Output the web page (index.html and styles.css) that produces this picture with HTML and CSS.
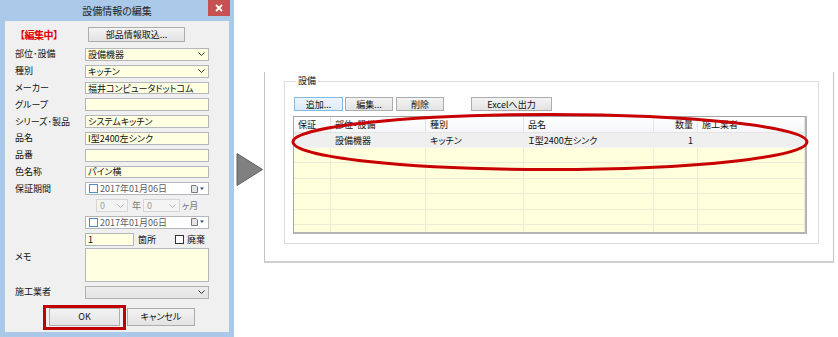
FILE: index.html
```html
<!DOCTYPE html>
<html lang="ja">
<head>
<meta charset="utf-8">
<title>設備情報の編集</title>
<link rel="stylesheet" href="styles.css">
</head>
<body>
<div class="page">
  <div class="dialog">
    <div class="titlebar">
      <span></span>
      <span class="title">設備情報の編集</span>
      <span class="close"><svg width="8" height="8" viewBox="0 0 8 8"><path d="M1 1 L7 7 M7 1 L1 7" stroke="#fff" stroke-width="1.8"/></svg></span>
    </div>
    <div class="dbody">
      <div class="row r-top">
        <div class="lbl editing">【編集中】</div>
        <button class="btn import">部品情報取込...</button>
      </div>
      <div class="row r-first">
        <div class="lbl">部位･設備</div>
        <div class="field select"><span>設備機器</span><svg class="chev" width="7" height="4" viewBox="0 0 7 4"><path d="M0.5 0.5 L3.5 3.5 L6.5 0.5" fill="none" stroke="#333" stroke-width="1"/></svg></div>
      </div>
      <div class="row">
        <div class="lbl">種別</div>
        <div class="field select"><span>キッチン</span><svg class="chev" width="7" height="4" viewBox="0 0 7 4"><path d="M0.5 0.5 L3.5 3.5 L6.5 0.5" fill="none" stroke="#333" stroke-width="1"/></svg></div>
      </div>
      <div class="row">
        <div class="lbl">メーカー</div>
        <div class="field">福井コンピュータドットコム</div>
      </div>
      <div class="row">
        <div class="lbl">グループ</div>
        <div class="field"></div>
      </div>
      <div class="row">
        <div class="lbl">シリーズ･製品</div>
        <div class="field">システムキッチン</div>
      </div>
      <div class="row">
        <div class="lbl">品名</div>
        <div class="field">I型2400左シンク</div>
      </div>
      <div class="row">
        <div class="lbl">品番</div>
        <div class="field"></div>
      </div>
      <div class="row">
        <div class="lbl">色名称</div>
        <div class="field">パイン横</div>
      </div>
      <div class="row">
        <div class="lbl">保証期間</div>
        <div class="field date"><span class="cb blue"></span><span class="dtext">2017年01月06日</span><span class="dicons"><svg width="14" height="8" viewBox="0 0 14 8"><path d="M0.5 0.5 H5 L6.5 2 V7.5 H0.5 Z" fill="#e4e4e4" stroke="#7a7a7a" stroke-width="1"/><path d="M9 2.5 H13 L11 5 Z" fill="#2d4f8f"/></svg></span></div>
      </div>
      <div class="row">
        <div class="lbl"></div>
        <div class="period">
          <div class="dis d1"><span>0</span><svg width="7" height="4" viewBox="0 0 7 4"><path d="M0.5 0.5 L3.5 3.5 L6.5 0.5" fill="none" stroke="#b5b5b5" stroke-width="1"/></svg></div>
          <span class="unit u1">年</span>
          <div class="dis d2"><span>0</span><svg width="7" height="4" viewBox="0 0 7 4"><path d="M0.5 0.5 L3.5 3.5 L6.5 0.5" fill="none" stroke="#b5b5b5" stroke-width="1"/></svg></div>
          <span class="unit u2">ヶ月</span>
        </div>
      </div>
      <div class="row">
        <div class="lbl"></div>
        <div class="field date"><span class="cb blue"></span><span class="dtext">2017年01月06日</span><span class="dicons"><svg width="14" height="8" viewBox="0 0 14 8"><path d="M0.5 0.5 H5 L6.5 2 V7.5 H0.5 Z" fill="#e4e4e4" stroke="#7a7a7a" stroke-width="1"/><path d="M9 2.5 H13 L11 5 Z" fill="#2d4f8f"/></svg></span></div>
      </div>
      <div class="row">
        <div class="lbl"></div>
        <div class="field qty">1</div>
        <span class="qunit">箇所</span>
        <span class="cb plain"></span>
        <span class="discard">廃棄</span>
      </div>
      <div class="row r-memo">
        <div class="lbl memo-lbl">メモ</div>
        <div class="field memo"></div>
      </div>
      <div class="row r-contractor">
        <div class="lbl">施工業者</div>
        <div class="field select gray"><span></span><svg class="chev" width="7" height="4" viewBox="0 0 7 4"><path d="M0.5 0.5 L3.5 3.5 L6.5 0.5" fill="none" stroke="#333" stroke-width="1"/></svg></div>
      </div>
      <div class="actions">
        <span class="highlight"><button class="btn ok">OK</button></span>
        <button class="btn cancel">キャンセル</button>
      </div>
    </div>
  </div>

  <div class="arrow">
    <svg width="30" height="33" viewBox="0 0 30 33"><polygon points="3,0.5 28.5,16.5 3,32.5" fill="#808080" stroke="#5e5e5e" stroke-width="1"/></svg>
  </div>

  <div class="panel">
    <div class="group">
      <div class="gtitle">設備</div>
      <div class="toolbar">
        <button class="btn tb add">追加...</button>
        <button class="btn tb edit">編集...</button>
        <button class="btn tb del">削除</button>
        <button class="btn tb excel">Excelへ出力</button>
      </div>
      <div class="grid">
        <div class="c h">保証</div><div class="c h">部位・設備</div><div class="c h">種別</div><div class="c h">品名</div><div class="c h num">数量</div><div class="c h">施工業者</div>
        <div class="c r1"></div><div class="c r1">設備機器</div><div class="c r1">キッチン</div><div class="c r1">Ｉ型2400左シンク</div><div class="c r1 num">1</div><div class="c r1"></div>
        <div class="c"></div><div class="c"></div><div class="c"></div><div class="c"></div><div class="c"></div><div class="c"></div>
        <div class="c"></div><div class="c"></div><div class="c"></div><div class="c"></div><div class="c"></div><div class="c"></div>
        <div class="c"></div><div class="c"></div><div class="c"></div><div class="c"></div><div class="c"></div><div class="c"></div>
        <div class="c"></div><div class="c"></div><div class="c"></div><div class="c"></div><div class="c"></div><div class="c"></div>
        <div class="c"></div><div class="c"></div><div class="c"></div><div class="c"></div><div class="c"></div><div class="c"></div>
        <div class="c"></div><div class="c"></div><div class="c"></div><div class="c"></div><div class="c"></div><div class="c"></div>
      </div>
    </div>
  </div>

  <svg class="ring" width="838" height="337" viewBox="0 0 838 337"><ellipse cx="550" cy="142" rx="257" ry="27.5" fill="none" stroke="#c80000" stroke-width="3"/></svg>
</div>
</body>
</html>
```

FILE: styles.css
```css
* { box-sizing: border-box; }
html, body {
  margin: 0;
  padding: 0;
  background: #fff;
}
body {
  font-family: "Noto Sans CJK JP", "Noto Sans", sans-serif;
  font-size: 9px;
  font-feature-settings: "palt";
  color: #111;
}
.page {
  position: relative;
  width: 838px;
  height: 337px;
  overflow: hidden;
  display: flex;
  align-items: flex-start;
}

/* dialog */
.dialog {
  flex: none;
  width: 234px;
  height: 337px;
  background: #aac9e8;
  display: flex;
  flex-direction: column;
}
.titlebar {
  height: 21px;
  flex: none;
  display: grid;
  grid-template-columns: 1fr auto 1fr;
  align-items: start;
}
.title {
  font-size: 10px;
  line-height: 22px;
  color: #222;
}
.close {
  justify-self: end;
  margin-right: 4px;
  width: 22px;
  height: 16px;
  background: #c75050;
  display: flex;
  align-items: center;
  justify-content: center;
}
.dbody {
  margin: 0 5px;
  height: 311px;
  flex: none;
  background: #f0f0f0;
  padding-left: 10px;
  display: flex;
  flex-direction: column;
}
.row {
  flex: none;
  display: flex;
  align-items: center;
  height: 12.8px;
  margin-top: 4px;
}
.r-top { height: 15px; margin-top: 6px; }
.r-first { margin-top: 6px; }
.r-memo { height: 34px; margin-top: 2px; align-items: flex-start; }
.r-contractor { margin-top: 4.4px; }
.lbl {
  flex: none;
  width: 70px;
  line-height: 12px;
  white-space: nowrap;
}
.editing {
  color: #e00000;
  font-weight: bold;
  font-size: 10px;
  font-feature-settings: normal;
  letter-spacing: -0.5px;
}
.memo-lbl { margin-top: 3px; }

.btn {
  font: inherit;
  font-feature-settings: "palt";
  color: #111;
  margin: 0;
  padding: 0;
  border: 1px solid #adadad;
  background: linear-gradient(#f3f3f3, #e3e3e3);
  display: flex;
  align-items: center;
  justify-content: center;
  line-height: 11px;
}
.import { margin-left: 3px; width: 97px; height: 15px; }

.field {
  flex: none;
  width: 124px;
  height: 100%;
  border: 1px solid #b4b6bb;
  background: #ffffe1;
  display: flex;
  align-items: center;
  padding-left: 2px;
  line-height: 11px;
  white-space: nowrap;
}
.select { justify-content: space-between; padding-right: 3px; }
.select.gray { background: linear-gradient(#ededed, #e3e3e3); border-color: #b0b0b0; }
.date { background: #fff; padding-left: 3px; }
.dtext { color: #5c5c5c; flex: 1; margin-left: 2px; }
.dicons { display: flex; margin-right: 3px; }
.cb {
  flex: none;
  width: 9px;
  height: 9px;
  background: #fff;
}
.cb.blue { border: 1px solid #4a8ccc; }
.cb.plain { border: 1px solid #333; margin-left: 19px; }
.discard { margin-left: 3px; }
.qty { width: 49px; }
.qunit { margin-left: 4px; }
.memo { height: 34px; }

.period {
  display: flex;
  align-items: center;
  height: 100%;
  margin-left: 11px;
}
.dis {
  height: 100%;
  border: 1px solid #d6d6d6;
  background: #f4f4f4;
  color: #a0a0a0;
  display: flex;
  align-items: center;
  justify-content: space-between;
  padding: 0 3px 0 3px;
  line-height: 11px;
}
.d1 { width: 32px; }
.d2 { width: 37px; margin-left: 2px; }
.unit { color: #7a7a7a; }
.u1 { margin-left: 4px; }
.u2 { margin-left: 2px; }

.actions {
  flex: none;
  display: flex;
  align-items: flex-start;
  margin-top: 6.2px;
  margin-left: 28px;
}
.highlight {
  display: flex;
  border: 3px solid #c00000;
  padding: 0 3px 1px 3px;
}
.ok { width: 71px; height: 18px; }
.cancel { width: 68px; height: 18px; margin-top: 3px; margin-left: 1px; }

/* arrow */
.arrow {
  flex: none;
  width: 30px;
  margin-top: 153px;
  display: flex;
}

/* right panel */
.panel {
  flex: none;
  width: 570px;
  height: 191px;
  margin-top: 72px;
  border-left: 1px solid #c4c4c4;
  border-right: 1px solid #c4c4c4;
  border-bottom: 2px solid #d0d0d0;
  padding-top: 9px;
}
.group {
  margin-left: 19px;
  width: 535px;
  height: 163px;
  border: 1px solid #dcdcdc;
  padding-left: 8px;
}
.gtitle {
  width: fit-content;
  margin-top: -7px;
  margin-left: 3px;
  padding: 0 2px;
  background: #fff;
  line-height: 12px;
}
.toolbar {
  display: flex;
  height: 14px;
  margin-top: 10px;
  margin-left: 1px;
}
.tb { height: 14px; }
.add { width: 49px; border-color: #86b8e6; background: linear-gradient(#edf5fd, #dcebfa); }
.edit { width: 48px; margin-left: 2px; }
.del { width: 48px; margin-left: 3px; }
.excel { width: 81px; margin-left: 27px; }

.grid {
  margin-top: 5px;
  width: 514px;
  height: 118px;
  overflow: hidden;
  border: 1px solid #a6a6a6;
  border-right: 2px solid #b4b4b4;
  border-bottom: 2px solid #b4b4b4;
  background: #ffffdc;
  display: grid;
  grid-template-columns: 37px 95px 98px 130px 44px 1fr;
  grid-template-rows: 16px 15px;
  grid-auto-rows: 15.4px;
}
.c {
  border-right: 1px solid #ecebd6;
  border-bottom: 1px solid #ecebd6;
  padding: 0 4px;
  display: flex;
  align-items: center;
  white-space: nowrap;
  line-height: 11px;
  overflow: hidden;
}
.c.h {
  background: linear-gradient(#ffffff, #f6f7f9);
  border-right-color: #e2e4e8;
  border-bottom-color: #e4e4e4;
}
.c.r1 { background: #efefef; border-right-color: #efefef; border-bottom-color: #f4f4f4; }
.num { justify-content: flex-end; }

.ring {
  position: absolute;
  left: 0;
  top: 0;
  pointer-events: none;
}
```
